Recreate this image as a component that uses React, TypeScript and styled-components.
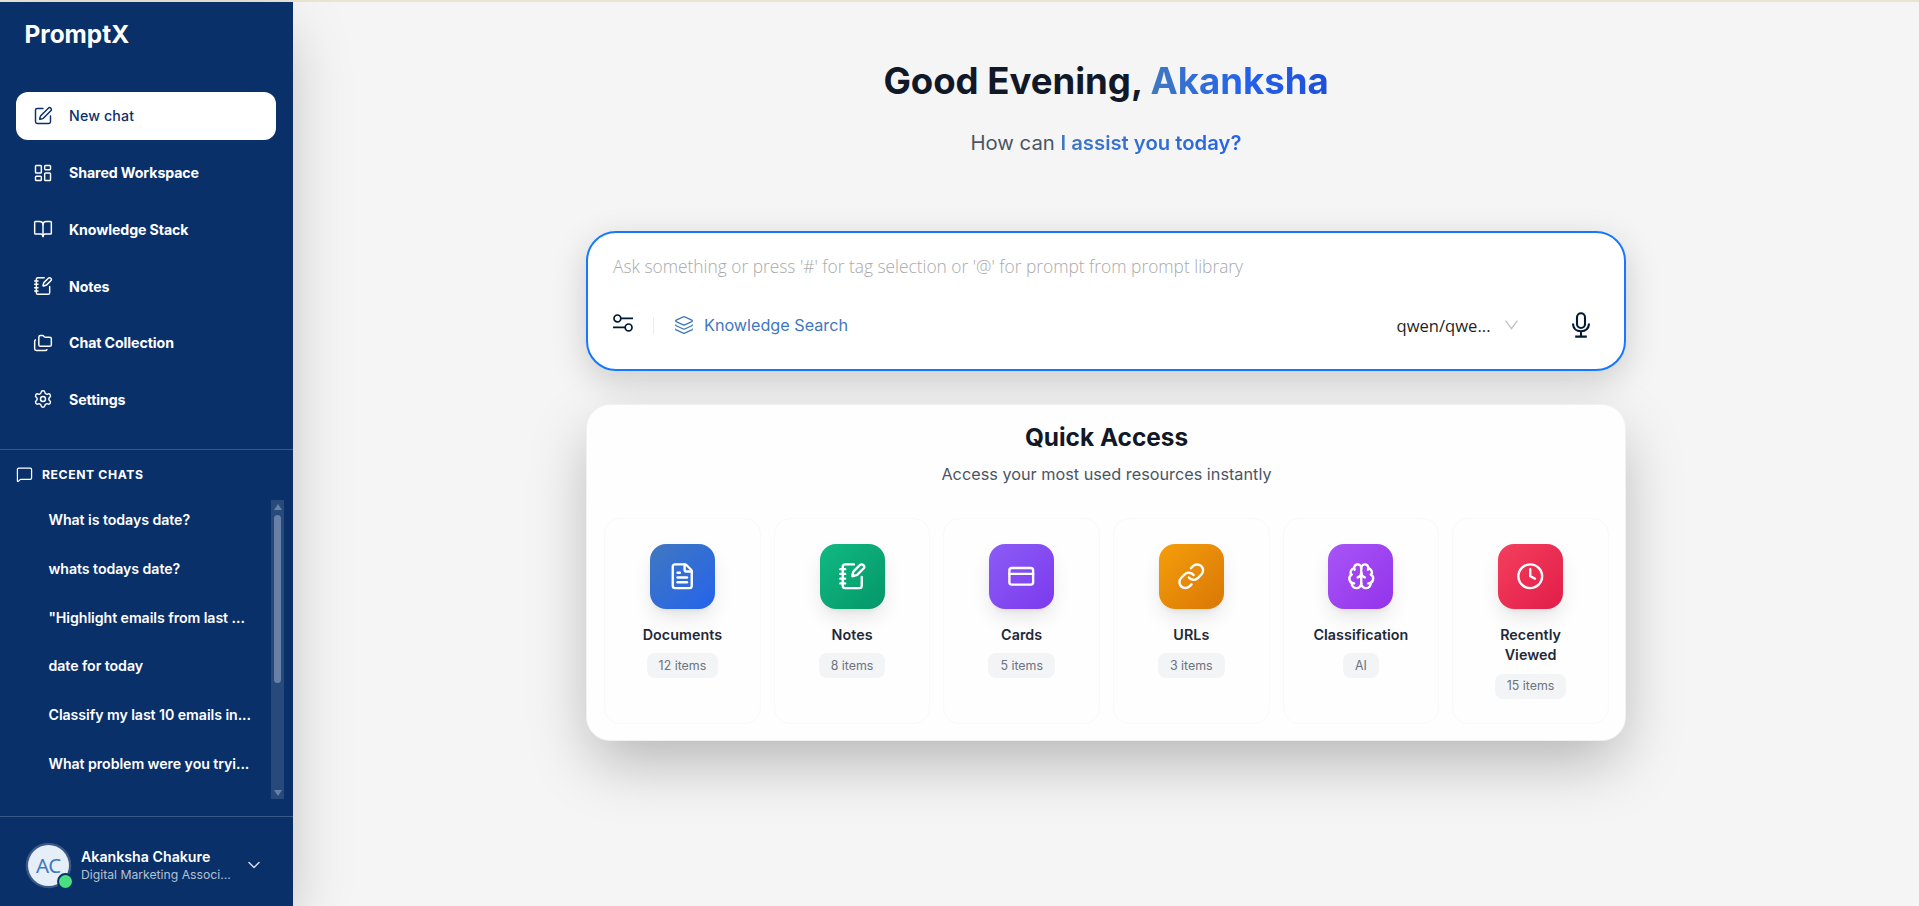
import React from 'react';
import styled, { createGlobalStyle, css } from 'styled-components';
import {
  BookOpen,
  Brain,
  ChevronDown,
  Clock,
  CreditCard,
  FileText,
  Folders,
  Layers,
  LayoutDashboard,
  Link,
  LucideIcon,
  MessageSquare,
  NotebookPen,
  Settings,
  SquarePen,
} from 'lucide-react';

interface NavEntry {
  label: string;
  icon: LucideIcon;
}

interface QuickItem {
  title: string;
  badge: string;
  icon: LucideIcon;
  from: string;
  to: string;
}

const navList: NavEntry[] = [
  { label: 'New chat', icon: SquarePen },
  { label: 'Shared Workspace', icon: LayoutDashboard },
  { label: 'Knowledge Stack', icon: BookOpen },
  { label: 'Notes', icon: NotebookPen },
  { label: 'Chat Collection', icon: Folders },
  { label: 'Settings', icon: Settings },
];

const recentChats = [
  'What is todays date?',
  'whats todays date?',
  '"Highlight emails from last ...',
  'date for today',
  'Classify my last 10 emails in...',
  'What problem were you tryi...',
];

const quickItems: QuickItem[] = [
  { title: 'Documents', badge: '12 items', icon: FileText, from: '#4078c0', to: '#2563eb' },
  { title: 'Notes', badge: '8 items', icon: NotebookPen, from: '#10b981', to: '#059669' },
  { title: 'Cards', badge: '5 items', icon: CreditCard, from: '#8b5cf6', to: '#7c3aed' },
  { title: 'URLs', badge: '3 items', icon: Link, from: '#f59e0b', to: '#d97706' },
  { title: 'Classification', badge: 'AI', icon: Brain, from: '#a855f7', to: '#9333ea' },
  { title: 'Recently Viewed', badge: '15 items', icon: Clock, from: '#f43f5e', to: '#e11d48' },
];

const GlobalStyle = createGlobalStyle`
  * {
    box-sizing: border-box;
  }
  body {
    margin: 0;
    overflow: hidden;
    background: #f5f5f5;
    font-family: Inter, 'Liberation Sans', sans-serif;
  }
  button {
    border: 0;
    padding: 0;
    background: none;
    font: inherit;
    color: inherit;
  }
  h1, h2, p {
    margin: 0;
  }
`;

const Page = styled.div`
  display: flex;
  height: 906px;
  border-top: 2px solid #ebe3d3;
`;

const Sidebar = styled.aside`
  display: flex;
  flex-direction: column;
  flex: none;
  width: 293px;
  background: #0a3069;
  color: #fff;
  box-shadow: 0 25px 60px -8px rgba(0, 0, 0, 0.25);
`;

const Logo = styled.div`
  height: 90px;
  padding: 14px 0 0 24.5px;
  font-size: 24.4px;
  font-weight: 700;
  line-height: 36px;
`;

const Nav = styled.nav`
  display: flex;
  flex-direction: column;
  gap: 8.8px;
  height: 357px;
  padding: 0 17px 0 16px;
`;

const NavButton = styled.button<{ $active: boolean }>`
  display: flex;
  align-items: center;
  gap: 16px;
  height: 47.9px;
  padding: 0 17px;
  border-radius: 12px;
  font-size: 14.2px;
  font-weight: 700;
  letter-spacing: -0.1px;
  text-align: left;
  ${(props) =>
    props.$active &&
    css`
      background: #fff;
      color: #0a3069;
      font-weight: 500;
      letter-spacing: 0.15px;
    `}
`;

const Recent = styled.section`
  flex: none;
  height: 367px;
  border-top: 1px solid rgba(255, 255, 255, 0.2);
`;

const RecentTitle = styled.div`
  display: flex;
  align-items: center;
  gap: 9px;
  height: 50px;
  padding: 0 16px 2px;
  font-size: 12.2px;
  font-weight: 700;
  letter-spacing: 0.6px;
`;

const RecentBody = styled.div`
  display: flex;
  justify-content: space-between;
  height: 299px;
  padding-right: 9px;
`;

const RecentList = styled.div`
  display: flex;
  flex-direction: column;
  padding-left: 48.5px;
`;

const RecentItem = styled.div`
  height: 48.8px;
  line-height: 40px;
  font-size: 14.2px;
  font-weight: 600;
  letter-spacing: -0.07px;
  white-space: nowrap;
`;

const ScrollTrack = styled.div`
  display: flex;
  flex-direction: column;
  align-items: center;
  justify-content: space-between;
  width: 13px;
  padding: 4px 0 3px;
  background: rgba(255, 255, 255, 0.12);
`;

const ScrollThumb = styled.div`
  width: 7px;
  height: 168px;
  margin: 5px 0 auto;
  border-radius: 4px;
  background: #6880a6;
`;

const ScrollArrow = styled.div<{ $down?: boolean }>`
  border: 0 solid transparent;
  border-width: 0 4.5px 6px;
  border-bottom-color: #6880a6;
  transform: ${(props) => (props.$down ? 'rotate(180deg)' : 'none')};
`;

const Profile = styled.div`
  display: flex;
  align-items: center;
  flex: 1;
  padding: 8px 24px 0 28px;
  border-top: 1px solid rgba(255, 255, 255, 0.2);
`;

const Avatar = styled.div`
  position: relative;
  display: flex;
  align-items: center;
  justify-content: center;
  width: 41px;
  height: 41px;
  padding-bottom: 2px;
  border-radius: 50%;
  background: #e6eff8;
  box-shadow: 0 0 0 2.3px rgba(255, 255, 255, 0.2);
  color: #4078c0;
  font-family: 'Noto Sans', sans-serif;
  font-size: 20.5px;
  letter-spacing: -0.3px;
`;

const OnlineDot = styled.span`
  position: absolute;
  right: -4.5px;
  bottom: -4px;
  width: 17px;
  height: 17px;
  border: 2px solid #0a3069;
  border-radius: 50%;
  background: #4ade80;
`;

const ProfileText = styled.div`
  width: 163px;
  margin-left: 12px;
`;

const ProfileName = styled.div`
  font-size: 14.2px;
  font-weight: 600;
  line-height: 18px;
`;

const ProfileRole = styled.div`
  font-size: 12.2px;
  line-height: 17px;
  color: #b5c1d2;
`;

const ProfileChevron = styled(ChevronDown)`
  margin-bottom: 2px;
`;

const Main = styled.main`
  display: flex;
  flex-direction: column;
  align-items: center;
  flex: 1;
`;

const Greeting = styled.h1`
  margin-top: 56px;
  font-size: 36.6px;
  font-weight: 700;
  line-height: 46px;
  letter-spacing: -0.03px;
  color: #111827;
`;

const GradientText = styled.span<{ $stops: string; $weight?: number }>`
  background: linear-gradient(90deg, ${(props) => props.$stops});
  background-clip: text;
  -webkit-background-clip: text;
  color: transparent;
  font-weight: ${(props) => props.$weight ?? 'inherit'};
`;

const SubGreeting = styled.p`
  margin-top: 23px;
  font-size: 20.3px;
  line-height: 32px;
  color: #4b5563;
`;

const PromptBox = styled.section`
  display: flex;
  flex-direction: column;
  width: 1040px;
  height: 140px;
  margin-top: 72px;
  padding: 19px 30px 0 25px;
  border: 2px solid #1677ff;
  border-radius: 30px;
  background: #fff;
  box-shadow: 0 10px 34px rgba(0, 0, 0, 0.17);
`;

const Placeholder = styled.div`
  height: 54px;
  font-family: 'Open Sans', 'Noto Sans', sans-serif;
  font-size: 17.35px;
  font-weight: 300;
  line-height: 28px;
  color: #a9a9a9;
`;

const Tools = styled.div`
  display: flex;
  align-items: center;
  height: 38px;
  color: #001a33;
`;

const FilterIcon = styled.svg`
  margin-bottom: 4px;
`;

const Separator = styled.span`
  width: 1px;
  height: 17px;
  margin: 0 20px;
  background: #ebebeb;
`;

const KnowledgeButton = styled.button`
  display: flex;
  align-items: center;
  gap: 10px;
  font-size: 16.2px;
  color: #4078c0;
`;

const ModelSelect = styled.button`
  display: flex;
  align-items: center;
  gap: 14.5px;
  margin-left: auto;
  margin-right: 53.5px;
  font-family: 'Open Sans', 'Noto Sans', sans-serif;
  font-size: 16.6px;
  color: #1f1f1f;
`;

const MicIcon = styled.svg`
  margin-right: 4.5px;
`;

const QuickPanel = styled.section`
  width: 1040px;
  height: 337px;
  margin-top: 33px;
  padding: 15px 16px 0 17px;
  border: 1px solid #f1f1f1;
  border-radius: 24px;
  background: #fefefe;
  box-shadow: 0 25px 62px -6px rgba(0, 0, 0, 0.27);
  text-align: center;
`;

const QuickTitle = styled.h2`
  font-size: 24.4px;
  font-weight: 700;
  line-height: 34px;
  color: #111827;
`;

const QuickSubtitle = styled.p`
  margin-top: 7px;
  font-size: 16.25px;
  line-height: 26px;
  color: #4b5563;
`;

const QuickGrid = styled.div`
  display: grid;
  grid-template-columns: repeat(6, 1fr);
  gap: 12.8px;
  margin-top: 31px;
`;

const QuickCard = styled.div`
  display: flex;
  flex-direction: column;
  align-items: center;
  height: 206px;
  padding: 25px 24px 0;
  border: 1px solid #f9f9fa;
  border-radius: 16px;
`;

const IconTile = styled.div<{ $from: string; $to: string }>`
  display: flex;
  align-items: center;
  justify-content: center;
  flex: none;
  width: 65px;
  height: 65px;
  border-radius: 16px;
  background: linear-gradient(135deg, ${(props) => props.$from}, ${(props) => props.$to});
  box-shadow: 0 10px 20px -2px rgba(0, 0, 0, 0.1), 0 4px 6px -4px rgba(0, 0, 0, 0.1);
  color: #fff;
`;

const CardTitle = styled.div`
  margin-top: 16px;
  font-size: 14.3px;
  font-weight: 600;
  line-height: 20.3px;
  letter-spacing: 0.05px;
  color: #1f2937;
`;

const CardBadge = styled.span`
  margin-top: 8px;
  padding: 0.5px 12px 0;
  border-radius: 8px;
  background: #f3f4f6;
  font-size: 12.4px;
  line-height: 24.5px;
  color: #6b7280;
`;

export default function App() {
  return (
    <>
      <GlobalStyle />
      <Page>
        <Sidebar>
          <Logo>PromptX</Logo>
          <Nav>
            {navList.map(({ label, icon: Icon }, index) => (
              <NavButton key={label} type="button" $active={index === 0}>
                <Icon size={20} strokeWidth={1.75} />
                {label}
              </NavButton>
            ))}
          </Nav>

          <Recent>
            <RecentTitle>
              <MessageSquare size={17} strokeWidth={1.75} />
              RECENT CHATS
            </RecentTitle>
            <RecentBody>
              <RecentList>
                {recentChats.map((chat) => (
                  <RecentItem key={chat}>{chat}</RecentItem>
                ))}
              </RecentList>
              <ScrollTrack>
                <ScrollArrow />
                <ScrollThumb />
                <ScrollArrow $down />
              </ScrollTrack>
            </RecentBody>
          </Recent>

          <Profile>
            <Avatar>
              AC
              <OnlineDot />
            </Avatar>
            <ProfileText>
              <ProfileName>Akanksha Chakure</ProfileName>
              <ProfileRole>Digital Marketing Associ...</ProfileRole>
            </ProfileText>
            <ProfileChevron size={20} strokeWidth={1.75} color="#d5dce6" />
          </Profile>
        </Sidebar>

        <Main>
          <Greeting>
            Good Evening, <GradientText $stops="#4078c0, #2563eb, #1d4ed8">Akanksha</GradientText>
          </Greeting>
          <SubGreeting>
            How can{' '}
            <GradientText $stops="#4078c0, #2563eb" $weight={600}>
              I assist you today?
            </GradientText>
          </SubGreeting>

          <PromptBox>
            <Placeholder>
              Ask something or press &#39;#&#39; for tag selection or &#39;@&#39; for prompt from prompt library
            </Placeholder>
            <Tools>
              <FilterIcon width="20" height="18" viewBox="0 0 20 18" fill="none" stroke="currentColor" strokeWidth="1.7">
                <circle cx="4.4" cy="4.4" r="3.4" />
                <path d="M8 4.4h12M0 13.4h12" />
                <circle cx="15.6" cy="13.4" r="3.4" />
              </FilterIcon>
              <Separator />
              <KnowledgeButton type="button">
                <Layers size={20} strokeWidth={1.6} />
                Knowledge Search
              </KnowledgeButton>
              <ModelSelect type="button">
                qwen/qwe...
                <svg width="13" height="10" viewBox="0 0 13 10" fill="none" stroke="#bfbfbf" strokeWidth="1.3">
                  <path d="M0.6 0.6l5.9 8 5.9-8" />
                </svg>
              </ModelSelect>
              <MicIcon width="18" height="26" viewBox="0 0 18 26" fill="none" stroke="currentColor" strokeWidth="2.1">
                <rect x="5" y="1.2" width="8" height="14.8" rx="4" />
                <path d="M1 11.5c0 5 3.4 7.8 8 7.8s8-2.8 8-7.8M9 19.3v5M3.2 24.6h11.6" />
              </MicIcon>
            </Tools>
          </PromptBox>

          <QuickPanel>
            <QuickTitle>Quick Access</QuickTitle>
            <QuickSubtitle>Access your most used resources instantly</QuickSubtitle>
            <QuickGrid>
              {quickItems.map(({ title, badge, icon: Icon, from, to }) => (
                <QuickCard key={title}>
                  <IconTile $from={from} $to={to}>
                    <Icon size={28.5} strokeWidth={2} />
                  </IconTile>
                  <CardTitle>{title}</CardTitle>
                  <CardBadge>{badge}</CardBadge>
                </QuickCard>
              ))}
            </QuickGrid>
          </QuickPanel>
        </Main>
      </Page>
    </>
  );
}
